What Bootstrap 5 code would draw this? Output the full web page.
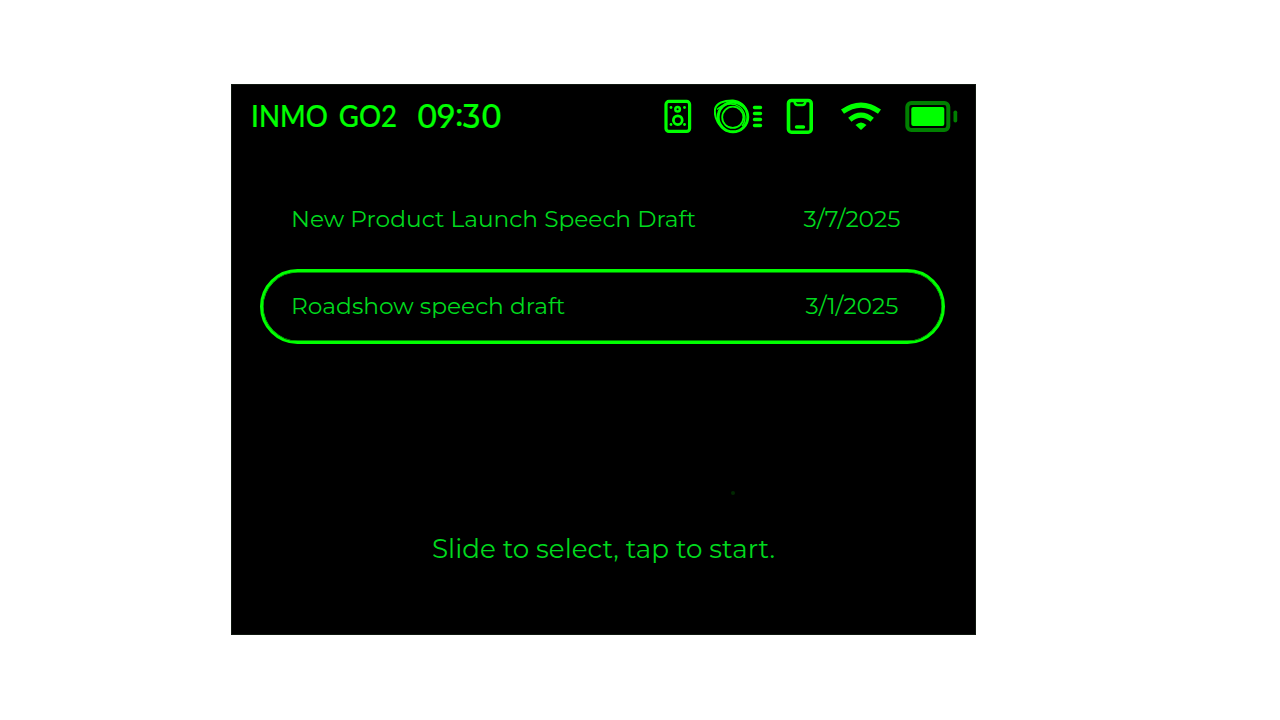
<!DOCTYPE html>
<html lang="en">
<head>
<meta charset="utf-8">
<meta name="viewport" content="width=device-width, initial-scale=1">
<title>INMO GO2</title>
<link href="https://cdn.jsdelivr.net/npm/bootstrap@5.3.0/dist/css/bootstrap.min.css" rel="stylesheet">
<style>
  body { background: #fff; height: 720px; overflow: hidden; }
  .screen { width: 745px; height: 551px; margin: 84px 0 0 231px; background: #000; color: #00d91e; font-family: Montserrat, Inter, "Open Sans", sans-serif; font-weight: 400; border: 1px solid #101810; white-space: nowrap; }
  .status { height: 62px; padding: 0 17px 0 19px; color: #0f0; font-family: Lato, sans-serif; font-weight: 500; line-height: 60px; -webkit-text-stroke: .2px #0f0; }
  .device { width: 166px; font-size: 30.8px; word-spacing: 4.5px; transform: scaleX(.895); transform-origin: 1px 50%; margin: 0 1px 0 -.5px; }
  .clock { font-size: 33.5px; letter-spacing: -.7px; margin-top: -1px; }
  .clock .colon { display: inline-block; transform: translateY(-2px); }
  .clock .three { font-family: Montserrat, sans-serif; display: inline-block; width: 19px; transform: scaleX(.9); transform-origin: 0 50%; }
  .status svg { display: block; flex: none; }
  .drafts { padding: 34px 30px 0 28px; font-size: 23.3px; }
  .draft { height: 76px; border: 4px solid transparent; border-radius: 38px; padding: 0 0 0 27px; }
  .draft + .draft { margin-top: 11px; }
  .draft.active { position: relative; }
  .draft.active::before { content: ""; position: absolute; inset: -3px -4px -4px; border: 3.5px solid #0f0; border-radius: 38px; box-shadow: inset 0 0 0 .5px #0f0; }
  .date { width: 166px; padding-right: 12px; }
  .hint { margin-top: 183px; font-size: 26.2px; line-height: 44px; }
  .glint { left: 499px; top: 406px; width: 4px; height: 4px; background: #002800; }
</style>
</head>
<body>
<main class="screen position-relative d-flex flex-column">
  <header class="status d-flex align-items-center">
    <span class="device">INMO GO2</span>
    <span class="clock">09<span class="colon">:</span><span class="three">3</span>0</span>
    <div class="d-flex align-items-center ms-auto">
      <svg width="50" height="40" viewBox="664 96 50 40" fill="none" stroke="#0f0">
        <rect x="666" y="101.4" width="23.6" height="30" rx="3" stroke-width="3.2"/>
        <circle cx="677.6" cy="109.2" r="2.3" stroke-width="2.5"/><circle cx="677.8" cy="120.2" r="4.4" stroke-width="2.8"/>
        <g fill="#0f0" stroke="none"><circle cx="671" cy="107.5" r="1.4"/><circle cx="684.5" cy="107.5" r="1.4"/><circle cx="671" cy="124.5" r="1.4"/><circle cx="684.5" cy="124.5" r="1.4"/></g>
      </svg>
      <svg width="72" height="40" viewBox="714 96 72 40" fill="none" stroke="#0f0">
        <circle cx="732.800" cy="117.300" r="10.600" stroke-width="1.8"/>
        <circle cx="733" cy="117" r="14.800" stroke-width="2.900"/>
        <path d="M727 131C719 127 714 118 715 109.500C716 103 724 100.300 733 100.500C740 101 746 106 747 113" stroke-width="2"/>
        <path d="M717 109.500C723 103.500 733 102.500 739 106.500C746 111.500 746.500 121 742 126" stroke-width="1.5"/>
        <path d="M754.500 107.500h6M754.500 113.500h6M754.500 119.500h6M754.500 125.500h6" stroke-width="3.4" stroke-linecap="round"/>
      </svg>
      <svg width="54" height="40" viewBox="786 96 54 40" fill="none" stroke="#0f0">
        <rect x="788.500" y="100.500" width="22.700" height="31.700" rx="3" stroke-width="3.600"/>
        <path d="M794.500 101.500Q795 105 797.500 105H802.500Q805 105 805.500 101.500" stroke-width="2.4"/>
        <path d="M796.500 127h7" stroke-width="3.400" stroke-linecap="round"/>
      </svg>
      <svg width="65" height="40" viewBox="840 96 65 40" fill="none" stroke="#0f0" stroke-width="5.200">
        <path d="M842.500 111.600Q861 98.500 879.500 111.600M849.800 119.700Q861 110.500 872.200 119.700"/>
        <path d="M855.500 125Q861 119.800 866.500 125L861 130Z" fill="#0f0" stroke="none"/>
      </svg>
      <svg width="53" height="40" viewBox="905 96 53 40">
        <rect x="907.300" y="103" width="41" height="27" rx="4" fill="none" stroke="#008000" stroke-width="4"/>
        <rect x="911.300" y="107" width="33" height="19" rx="2" fill="#0f0"/><rect x="953.500" y="110.500" width="3.700" height="12" rx="1.800" fill="#008000"/>
      </svg>
    </div>
  </header>
  <section class="drafts">
    <div class="draft d-flex align-items-center justify-content-between"><span>New Product Launch Speech Draft</span><span class="date text-center">3/7/2025</span></div>
    <div class="draft active d-flex align-items-center justify-content-between"><span>Roadshow speech draft</span><span class="date text-center">3/1/2025</span></div>
  </section>
  <p class="hint text-center mb-0">Slide to select, tap to start.</p>
  <i class="glint position-absolute rounded-circle"></i>
</main>
<script src="https://cdn.jsdelivr.net/npm/bootstrap@5.3.0/dist/js/bootstrap.bundle.min.js"></script>
</body>
</html>
